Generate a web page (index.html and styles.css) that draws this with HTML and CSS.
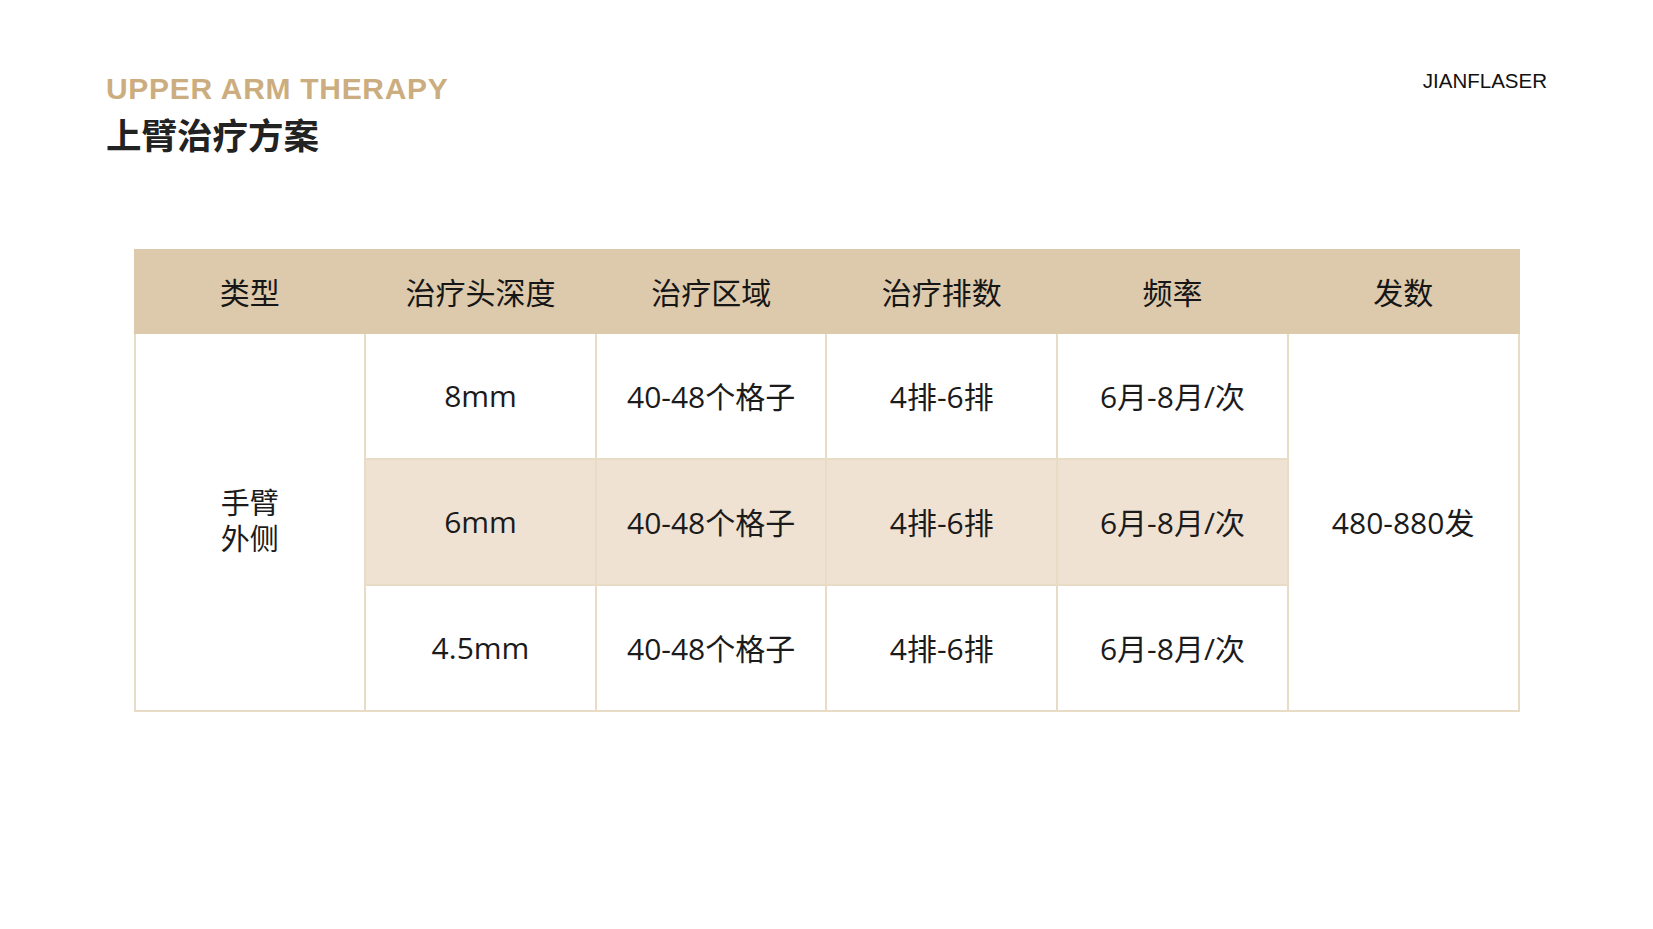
FILE: index.html
```html
<!DOCTYPE html>
<html lang="zh-CN">
<head>
<meta charset="utf-8">
<title>上臂治疗方案</title>
<link rel="stylesheet" href="styles.css">
</head>
<body>
<div class="page">
  <header class="topbar">
    <div class="titles">
      <div class="title-en">UPPER ARM THERAPY</div>
      <h1 class="title-zh">上臂治疗方案</h1>
    </div>
    <div class="brand">JIANFLASER</div>
  </header>
  <table class="plan">
    <thead>
      <tr>
        <th>类型</th>
        <th>治疗头深度</th>
        <th>治疗区域</th>
        <th>治疗排数</th>
        <th>频率</th>
        <th>发数</th>
      </tr>
    </thead>
    <tbody>
      <tr>
        <td rowspan="3" class="type"><span class="line">手臂</span><span class="line">外侧</span></td>
        <td>8mm</td>
        <td>40-48个格子</td>
        <td>4排-6排</td>
        <td>6月-8月/次</td>
        <td rowspan="3" class="count">480-880发</td>
      </tr>
      <tr class="alt">
        <td>6mm</td>
        <td>40-48个格子</td>
        <td>4排-6排</td>
        <td>6月-8月/次</td>
      </tr>
      <tr>
        <td>4.5mm</td>
        <td>40-48个格子</td>
        <td>4排-6排</td>
        <td>6月-8月/次</td>
      </tr>
    </tbody>
  </table>
</div>
</body>
</html>
```

FILE: styles.css
```css
html, body {
  margin: 0;
  padding: 0;
  background: #ffffff;
}

.page {
  width: 1653px;
  height: 929px;
  box-sizing: border-box;
  padding: 71px 106px 0 106px;
  font-family: "Open Sans", "Noto Sans CJK SC", sans-serif;
  color: #1b1b1b;
}

.topbar {
  display: flex;
  justify-content: space-between;
  align-items: flex-start;
}

.title-en {
  font-family: "Liberation Sans", Arial, sans-serif;
  font-weight: 700;
  font-size: 30px;
  line-height: 36px;
  letter-spacing: 0.7px;
  color: #cbad80;
}

.title-zh {
  margin: 5px 0 0 0;
  font-family: "Noto Sans CJK SC", sans-serif;
  font-weight: 700;
  font-size: 35.5px;
  line-height: 44px;
  color: #222222;
}

.brand {
  font-family: "Liberation Sans", Arial, sans-serif;
  font-size: 20.5px;
  line-height: 24px;
  margin-top: -2px;
  color: #111111;
}

.plan {
  width: 1386px;
  margin: 93px auto 0 auto;
  border-collapse: collapse;
  table-layout: fixed;
  font-size: 30px;
}

.plan th,
.plan td {
  border: 2px solid #e9dcc6;
  text-align: center;
  vertical-align: middle;
  padding: 0 0 2px 0;
  font-family: "Open Sans", "Noto Sans CJK SC", sans-serif;
}

.plan th {
  height: 79px;
  background: #ddc9ab;
  border-color: #ddc9ab;
  font-weight: 400;
  color: #161616;
}

.plan tbody tr {
  height: 126px;
}

.plan tbody tr.alt td {
  background: #efe2d3;
}

.plan .type {
  font-size: 29px;
  background: #ffffff;
}

.plan .type .line {
  display: block;
  line-height: 36px;
  height: 36px;
}

.plan .count {
  background: #ffffff;
}
```
